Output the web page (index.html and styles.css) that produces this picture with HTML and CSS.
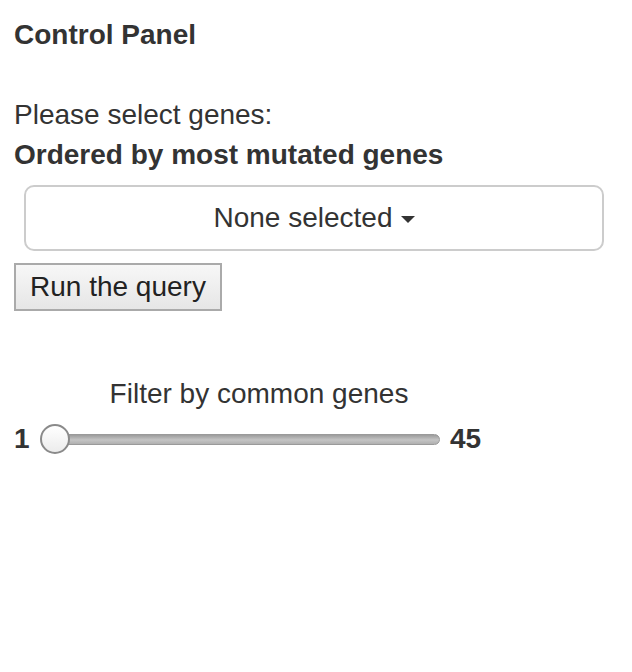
FILE: index.html
```html
<!DOCTYPE html>
<html>
<head>
<meta charset="utf-8">
<link rel="stylesheet" href="styles.css">
</head>
<body>
<div class="panel">
  <h4 class="title">Control Panel</h4>
  <div class="gene-group">
    <div class="label">Please select genes:</div>
    <div class="label-bold">Ordered by most mutated genes</div>
    <div class="dropdown-wrap">
      <button class="dropdown">None selected <span class="caret"></span></button>
    </div>
  </div>
  <button class="run">Run the query</button>
  <div class="slider-group">
    <div class="slider-label">Filter by common genes</div>
    <div class="slider">
      <span class="lim lim-min">1</span>
      <div class="track-wrap">
        <div class="track"></div>
        <span class="thumb"></span>
      </div>
      <span class="lim lim-max">45</span>
    </div>
  </div>
</div>
</body>
</html>
```

FILE: styles.css
```css
* { box-sizing: border-box; }
html, body {
  margin: 0;
  padding: 0;
  background: #fff;
}
body {
  font-family: "Liberation Sans", Arial, Helvetica, sans-serif;
  font-size: 28px;
  line-height: 40px;
  color: #333;
}
.panel {
  padding: 15px 14px 0 14px;
}
.title {
  margin: 0;
  font-size: 28px;
  font-weight: bold;
  line-height: 40px;
}
.gene-group {
  margin-top: 40px;
}
.label, .label-bold {
  height: 40px;
}
.label-bold {
  font-weight: bold;
}
.dropdown-wrap {
  padding: 10px 0 0 10px;
}
.dropdown {
  display: flex;
  align-items: center;
  justify-content: center;
  gap: 8px;
  width: 580px;
  height: 66px;
  border: 2px solid #cccccc;
  border-radius: 10px;
  background: #fff;
  font-family: inherit;
  font-size: 28px;
  line-height: 40px;
  color: #333;
  padding: 0;
}
.caret {
  display: inline-block;
  width: 0;
  height: 0;
  border-top: 7px solid #333;
  border-left: 7px solid transparent;
  border-right: 7px solid transparent;
  margin-top: 2px;
}
.run {
  display: block;
  margin-top: 12px;
  height: 48px;
  padding: 2px 14px;
  border: 2px solid #aaaaaa;
  border-radius: 0;
  background: linear-gradient(#f7f7f7, #e6e6e6);
  font-family: inherit;
  font-size: 28px;
  line-height: 40px;
  color: #222;
}
.slider-group {
  margin-top: 63px;
  width: 490px;
}
.slider-label {
  text-align: center;
  height: 40px;
}
.slider {
  display: flex;
  align-items: center;
  margin-top: 5px;
  height: 40px;
}
.lim {
  font-weight: bold;
}
.lim-min {
  width: 26px;
}
.track-wrap {
  position: relative;
  width: 400px;
  height: 40px;
  display: flex;
  align-items: center;
}
.track {
  margin-left: 14px;
  flex: 1;
  height: 11px;
  border-radius: 6px;
  border: 1px solid #9a9a9a;
  background: linear-gradient(#9c9c9c, #c4c4c4 55%, #b0b0b0);
}
.thumb {
  position: absolute;
  left: 0;
  top: 5px;
  width: 30px;
  height: 30px;
  border-radius: 50%;
  border: 2px solid #8a8a8a;
  background: linear-gradient(#ffffff, #ececec);
}
.lim-max {
  margin-left: 10px;
}
```
